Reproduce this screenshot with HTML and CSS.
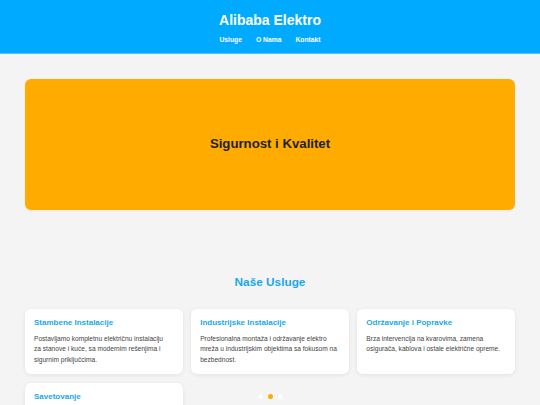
FILE: index.html
```html
<!DOCTYPE html>
<html lang="sr">
<head>
<meta charset="utf-8">
<title>Alibaba Elektro</title>
<link rel="stylesheet" href="styles.css">
</head>
<body>
<header class="site-header">
  <h1 class="brand">Alibaba Elektro</h1>
  <nav class="nav">
    <a href="#usluge">Usluge</a>
    <a href="#onama">O Nama</a>
    <a href="#kontakt">Kontakt</a>
  </nav>
</header>
<main class="main">
  <section class="hero">
    <h2 class="hero-title">Sigurnost i Kvalitet</h2>
  </section>
  <section class="services" id="usluge">
    <h2 class="section-title">Naše Usluge</h2>
    <div class="grid">
      <div class="card">
        <h3 class="card-title">Stambene Instalacije</h3>
        <p class="card-text">Postavljamo kompletnu električnu instalaciju<br>za stanove i kuće, sa modernim rešenjima i sigurnim priključcima.</p>
      </div>
      <div class="card">
        <h3 class="card-title">Industrijske Instalacije</h3>
        <p class="card-text">Profesionalna montaža i održavanje elektro mreža u industrijskim objektima sa fokusom na bezbednost.</p>
      </div>
      <div class="card">
        <h3 class="card-title">Održavanje i Popravke</h3>
        <p class="card-text">Brza intervencija na kvarovima, zamena osigurača, kablova i ostale električne opreme.</p>
      </div>
      <div class="card card-last">
        <h3 class="card-title">Savetovanje</h3>
      </div>
    </div>
  </section>
</main>
<div class="dots">
  <span class="dot"></span>
  <span class="dot active"></span>
  <span class="dot"></span>
</div>
</body>
</html>
```
FILE: styles.css
```css
* { box-sizing: border-box; }
html, body { margin: 0; padding: 0; }
body {
  background: #f4f4f4;
  font-family: "Liberation Sans", Arial, sans-serif;
  color: #333;
  overflow: hidden;
}
.site-header {
  background: #00aaff;
  text-align: center;
  padding: 12px 0 9px;
  border-bottom: 1px solid #4cc3ff;
}
.brand {
  margin: 0;
  font-size: 14px;
  line-height: 16px;
  font-weight: bold;
  color: #fff;
}
.nav {
  margin-top: 8px;
  display: flex;
  justify-content: center;
  gap: 14px;
  line-height: 8px;
}
.nav a {
  color: #fff;
  text-decoration: none;
  font-weight: bold;
  font-size: 6.75px;
}
.main {
  padding: 0 25px;
}
.hero {
  margin-top: 25px;
  height: 131px;
  background: #ffab00;
  border-radius: 6px;
  display: flex;
  align-items: center;
  justify-content: center;
  box-shadow: 0 1px 3px rgba(0,0,0,0.05);
}
.hero-title {
  margin: 0 0 3px;
  font-size: 13.2px;
  font-weight: bold;
  color: #222;
}
.section-title {
  margin: 65px 0 20px;
  text-align: center;
  font-size: 11.8px;
  line-height: 14px;
  color: #1aa7ec;
}
.grid {
  display: grid;
  grid-template-columns: repeat(3, 1fr);
  column-gap: 8.5px;
  row-gap: 9px;
}
.card {
  background: #fff;
  border-radius: 6px;
  padding: 9px 9px 9px;
  box-shadow: 0 1px 4px rgba(0,0,0,0.08);
}
.card-last {
  min-height: 40px;
}
.card-title {
  margin: 0 0 7px;
  font-size: 8px;
  line-height: 9px;
  color: #1aa7ec;
}
.card-text {
  margin: 0;
  font-size: 6.6px;
  line-height: 10.3px;
  color: #444;
}
.dots {
  position: fixed;
  left: 0;
  right: 0;
  top: 393.5px;
  display: flex;
  justify-content: center;
  gap: 5px;
}
.dot {
  width: 5px;
  height: 5px;
  border-radius: 50%;
  background: #fff;
  opacity: 0.7;
}
.dot.active {
  background: #ffab00;
  opacity: 1;
}
```
